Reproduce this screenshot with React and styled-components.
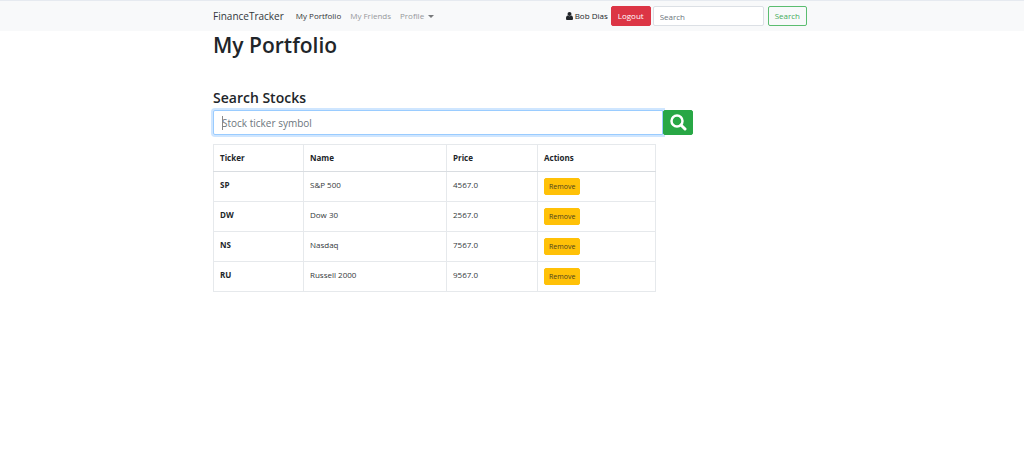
import React from "react";
import styled, { createGlobalStyle, css } from "styled-components";

const GlobalStyle = createGlobalStyle`
  *, *::before, *::after { box-sizing: border-box; }
  body {
    margin: 0;
    background: #fff;
    color: #212529;
    font: 400 8px/14px "Open Sans", "Noto Sans", sans-serif;
  }
  button, input { font: inherit; margin: 0; }
`;

const Container = styled.div`
  width: 100%;
  max-width: 598px;
  margin: 0 auto;
  padding-right: 4px;
`;

const Navbar = styled.nav`
  background: #f8f9fa;
  border-top: 1px solid #e6eaf0;
`;

const NavInner = styled(Container)`
  display: flex;
  align-items: center;
  height: 30px;
`;

const Brand = styled.a`
  margin-right: 12px;
  color: #33373a;
  font-size: 10px;
  text-decoration: none;
`;

const NavList = styled.ul`
  display: flex;
  gap: 9px;
  margin: 0;
  padding: 0;
  list-style: none;
`;

const NavLink = styled.a`
  display: flex;
  align-items: center;
  gap: 4px;
  color: ${(p) => (p.$active ? "#333639" : "#96989a")};
  text-decoration: none;
`;

const Caret = styled.span`
  border: solid transparent;
  border-width: 3px 3px 0;
  border-top-color: #77797b;
`;

const Account = styled.form`
  display: flex;
  align-items: center;
  margin-left: auto;
`;

const UserName = styled.span`
  display: flex;
  align-items: center;
  gap: 2px;
  margin-right: 3px;
`;

const variants = {
  danger: css`
    background: #dc3545;
    border-color: #dc3545;
    color: #fff;
  `,
  outline: css`
    background: transparent;
    border-color: #5bbd70;
    color: #45ac5c;
  `,
  warning: css`
    background: #ffc107;
    border-color: #ffc107;
    color: #4a4020;
  `,
  success: css`
    background: #28a745;
    border-color: #28a745;
    color: #fff;
  `,
};

const Button = styled.button`
  display: inline-flex;
  align-items: center;
  justify-content: center;
  height: 20px;
  padding: 0 6px;
  border: 1px solid;
  border-radius: 2px;
  cursor: pointer;
  ${(p) => variants[p.$variant]}
`;

const RemoveButton = styled(Button)`
  height: 17px;
  padding: 0 4px;
  font-size: 7px;
`;

const NavInput = styled.input`
  width: 111px;
  height: 20px;
  margin: 0 4px 0 2px;
  padding: 0 6px;
  border: 1px solid #dce0e5;
  border-radius: 2px;
  background: #fff;
  &::placeholder { color: #6c757d; opacity: 1; }
`;

const Title = styled.h1`
  margin: 0 0 29px;
  font-size: 21px;
  font-weight: 600;
  line-height: 28px;
`;

const Subtitle = styled.h2`
  margin: 0 0 2px;
  font-size: 14px;
  font-weight: 600;
  line-height: 20px;
`;

const SearchRow = styled.form`
  display: flex;
  max-width: 480px;
  margin-bottom: 9px;
`;

const TickerField = styled.div`
  position: relative;
  flex: 1;
`;

const TickerInput = styled.input`
  display: block;
  width: 100%;
  height: 25px;
  padding: 0 8px;
  border: 1px solid #9accff;
  border-radius: 2px 0 0 2px;
  outline: none;
  box-shadow: 0 0 0 2px #cfe6ff;
  font-size: 10px;
  caret-color: transparent;
  &::placeholder { color: #6c757d; opacity: 1; }
`;

const TextCursor = styled.span`
  position: absolute;
  top: 6px;
  left: 9px;
  width: 1px;
  height: 14px;
  background: #888;
`;

const SearchButton = styled(Button)`
  position: relative;
  width: 30px;
  height: 25px;
  padding: 0;
`;

const Table = styled.table`
  width: 100%;
  max-width: 442px;
  table-layout: fixed;
  border-collapse: collapse;
  text-align: left;
`;

const Column = styled.col`
  width: ${(p) => p.$width}px;
`;

const Cell = styled.td`
  height: 30px;
  padding: 6px;
  border: 1px solid #e6e9ec;
  color: #33373a;
  vertical-align: top;
`;

const HeadCell = styled(Cell)`
  height: 27px;
  border-bottom-color: #d9dde1;
  color: #212529;
  font-weight: 700;
`;

const RowHead = styled(Cell)`
  color: #212529;
  font-weight: 700;
`;

const ActionCell = styled(Cell)`
  padding-bottom: 5px;
  line-height: 0;
`;

const UserIcon = () => (
  <svg width="7" height="8" viewBox="0 0 14 16" fill="currentColor" aria-hidden="true">
    <circle cx="7" cy="4" r="4" />
    <path d="M3.5 7.2C1 7.6 0 10 0 13c0 2 1 3 2.600 3h8.800C13 16 14 15 14 13c0-3-1-5.400-3.500-5.800C8.500 9 5.500 9 3.500 7.200Z" />
  </svg>
);

const SearchIcon = () => (
  <svg width="17" height="17" viewBox="0 0 17 17" fill="none" stroke="currentColor" aria-hidden="true">
    <circle cx="7" cy="7" r="5.500" strokeWidth="2.500" />
    <path d="m11.200 11.200 3.800 3.800" strokeWidth="3" strokeLinecap="round" />
  </svg>
);

const stocks = [
  { ticker: "SP", name: "S&P 500", price: "4567.0" },
  { ticker: "DW", name: "Dow 30", price: "2567.0" },
  { ticker: "NS", name: "Nasdaq", price: "7567.0" },
  { ticker: "RU", name: "Russell 2000", price: "9567.0" },
];

export default function App() {
  return (
    <>
      <GlobalStyle />
      <Navbar>
        <NavInner>
          <Brand href="#">FinanceTracker</Brand>
          <NavList>
            <li><NavLink href="#portfolio" $active>My Portfolio</NavLink></li>
            <li><NavLink href="#friends">My Friends</NavLink></li>
            <li><NavLink href="#profile">Profile <Caret /></NavLink></li>
          </NavList>
          <Account onSubmit={(e) => e.preventDefault()}>
            <UserName><UserIcon />Bob Dias</UserName>
            <Button type="button" $variant="danger">Logout</Button>
            <NavInput type="search" placeholder="Search" aria-label="Search" />
            <Button type="submit" $variant="outline">Search</Button>
          </Account>
        </NavInner>
      </Navbar>
      <Container as="main">
        <Title>My Portfolio</Title>
        <Subtitle id="search-stocks">Search Stocks</Subtitle>
        <SearchRow onSubmit={(e) => e.preventDefault()}>
          <TickerField>
            <TickerInput type="text" placeholder="Stock ticker symbol" aria-labelledby="search-stocks" />
            <TextCursor />
          </TickerField>
          <SearchButton type="submit" $variant="success" aria-label="Search stocks">
            <SearchIcon />
          </SearchButton>
        </SearchRow>
        <Table>
          <colgroup>
            <Column $width={90} />
            <Column $width={143} />
            <Column $width={91} />
            <Column $width={118} />
          </colgroup>
          <thead>
            <tr>
              {["Ticker", "Name", "Price", "Actions"].map((label) => (
                <HeadCell as="th" scope="col" key={label}>{label}</HeadCell>
              ))}
            </tr>
          </thead>
          <tbody>
            {stocks.map((s) => (
              <tr key={s.ticker}>
                <RowHead as="th" scope="row">{s.ticker}</RowHead>
                <Cell>{s.name}</Cell>
                <Cell>{s.price}</Cell>
                <ActionCell>
                  <RemoveButton type="button" $variant="warning">Remove</RemoveButton>
                </ActionCell>
              </tr>
            ))}
          </tbody>
        </Table>
      </Container>
    </>
  );
}
